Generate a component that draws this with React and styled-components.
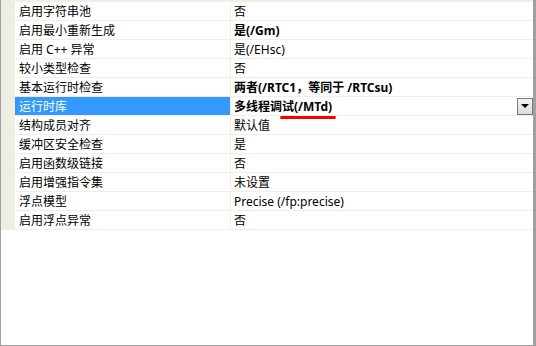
import React from "react";
import styled, { createGlobalStyle } from "styled-components";

const Global = createGlobalStyle`
  html, body { margin: 0; padding: 0; background: #ffffff; }
  body { font-family: "Noto Sans", "Noto Sans CJK SC", sans-serif; }
`;

const Frame = styled.div`
  width: 536px;
  height: 346px;
  box-sizing: border-box;
  border-left: 1px solid #a0a0a0;
  border-right: 3px solid #a0a0a0;
  border-bottom: 1px solid #a0a0a0;
  background: #ffffff;
`;

const Table = styled.div`
  display: flex;
  border-top: 2px solid #f0efe2;
`;

const Strip = styled.div`
  width: 14px;
  flex: none;
  background: #efeee3;
`;

const Rows = styled.div`
  flex: 1;
  display: flex;
  flex-direction: column;
`;

const Row = styled.div`
  display: flex;
  height: 19px;
  box-sizing: border-box;
  border-bottom: 1px solid #f0efe2;
  position: relative;
`;

const NameCell = styled.div`
  width: 216px;
  flex: none;
  box-sizing: border-box;
  padding-left: 4px;
  border-right: 1px solid #f0efe2;
  display: flex;
  align-items: center;
  font-size: 12px;
  color: ${(p) => (p.$selected ? "#ffffff" : "#000000")};
  background: ${(p) => (p.$selected ? "#3399ff" : "transparent")};
  white-space: nowrap;
`;

const ValueCell = styled.div`
  flex: 1;
  display: flex;
  align-items: center;
  padding-left: 3px;
  font-size: 12px;
  color: #000;
  font-weight: ${(p) => (p.$bold ? 700 : 400)};
  white-space: nowrap;
  position: relative;
`;

const DropButton = styled.div`
  margin-left: auto;
  width: 16px;
  height: 17px;
  box-sizing: border-box;
  border: 1px solid #7b7b7b;
  background: linear-gradient(#f2f2f2, #dcdcdc);
  display: flex;
  align-items: center;
  justify-content: center;
`;

const Arrow = styled.div`
  width: 0;
  height: 0;
  border-left: 4px solid transparent;
  border-right: 4px solid transparent;
  border-top: 4px solid #000;
`;

const RedMark = styled.span`
  position: absolute;
  left: 49px;
  top: 19px;
  width: 56px;
  height: 3px;
  border-radius: 2px;
  background: #ff0000;
  z-index: 2;
`;

const data = [
  ["启用字符串池", "否"],
  ["启用最小重新生成", "是(/Gm)", true],
  ["启用 C++ 异常", "是(/EHsc)"],
  ["较小类型检查", "否"],
  ["基本运行时检查", "两者(/RTC1，等同于 /RTCsu)", true],
  ["运行时库", "多线程调试(/MTd)", true, true],
  ["结构成员对齐", "默认值"],
  ["缓冲区安全检查", "是"],
  ["启用函数级链接", "否"],
  ["启用增强指令集", "未设置"],
  ["浮点模型", "Precise (/fp:precise)"],
  ["启用浮点异常", "否"],
];

export default function App() {
  return (
    <>
      <Global />
      <Frame>
        <Table>
          <Strip />
          <Rows>
            {data.map(([name, value, bold, selected]) => (
              <Row key={name}>
                <NameCell $selected={selected}>{name}</NameCell>
                <ValueCell $bold={bold}>
                  {value}
                  {selected && (
                    <>
                      <RedMark />
                      <DropButton>
                        <Arrow />
                      </DropButton>
                    </>
                  )}
                </ValueCell>
              </Row>
            ))}
          </Rows>
        </Table>
      </Frame>
    </>
  );
}
